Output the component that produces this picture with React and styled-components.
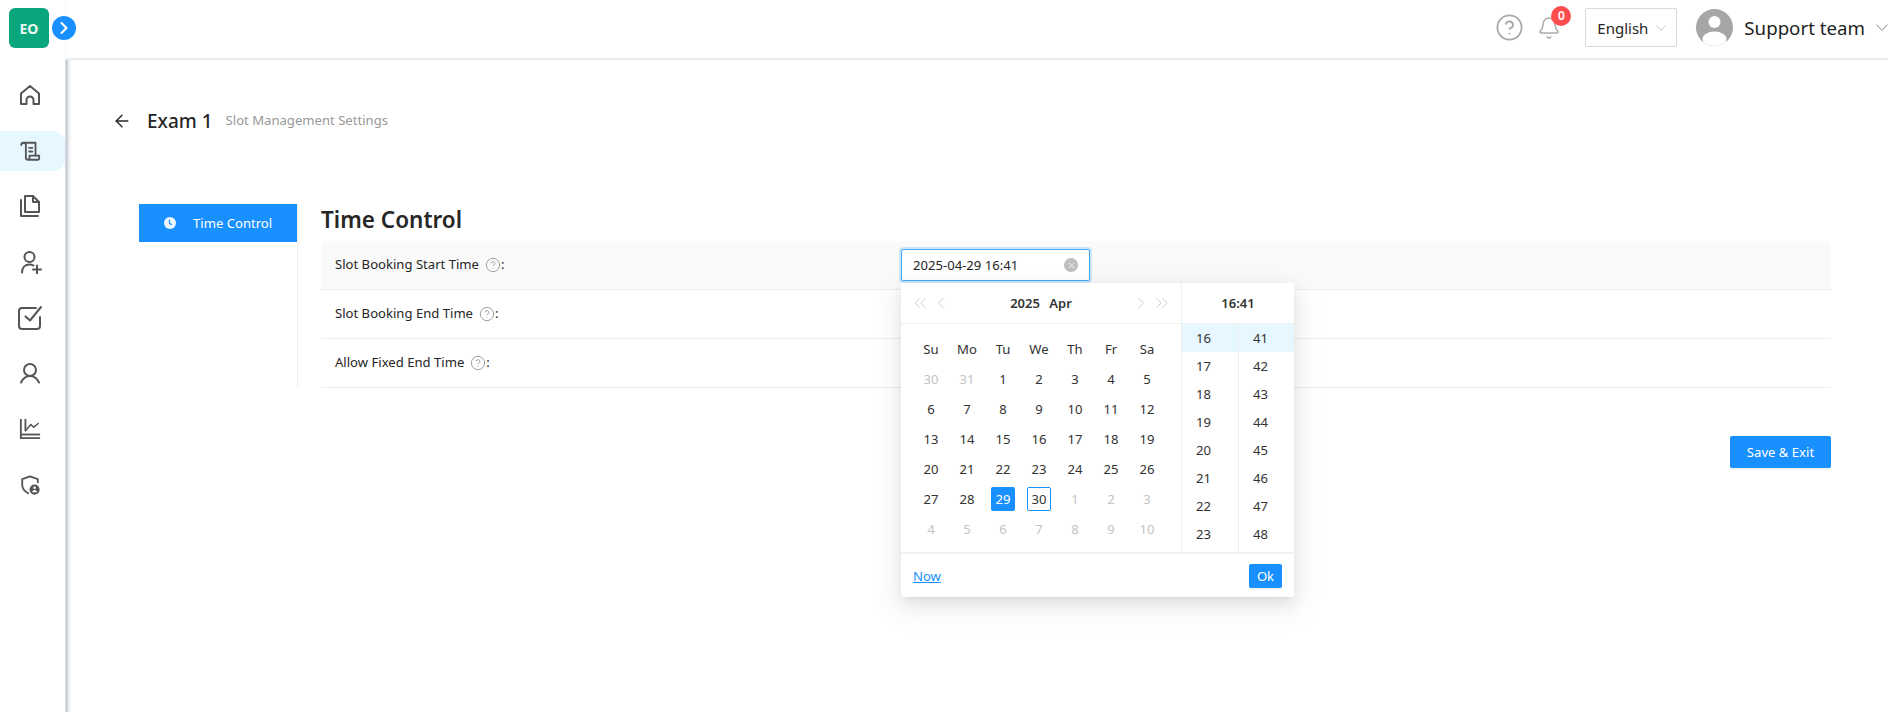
import styled, { createGlobalStyle } from 'styled-components';
import { ArrowLeft, ChevronRight, ChevronLeft, ChevronsLeft, ChevronsRight, Bell, CircleHelp, X } from 'lucide-react';

const GlobalStyle = createGlobalStyle`
  html, body { margin: 0; padding: 0; background: #fff; }
  body { font-family: "Noto Sans", "Open Sans", sans-serif; color: #262626; overflow: hidden; }
  * { box-sizing: border-box; }
`;

const Page = styled.div`
  width: 100%;
  height: 100vh;
  display: flex;
`;

const Sidebar = styled.nav`
  width: 65px;
  flex: none;
  display: flex;
  flex-direction: column;
  position: relative;
`;

const LogoWrap = styled.div`
  height: 75px;
  flex: none;
  padding: 8px 0 0 9px;
  margin-bottom: 15.7px;
  position: relative;
`;

const Logo = styled.div`
  width: 40px;
  height: 40px;
  border-radius: 6px;
  background: #0aa67d;
  color: #e9f8f3;
  font-size: 14px;
  font-weight: 700;
  display: flex;
  align-items: center;
  justify-content: center;
`;

const Expand = styled.div`
  position: absolute;
  left: 52px;
  top: 16px;
  z-index: 3;
  width: 24px;
  height: 24px;
  border-radius: 50%;
  background: #1890ff;
  color: #fff;
  display: flex;
  align-items: center;
  justify-content: center;
`;

const NavList = styled.div`
  display: flex;
  flex-direction: column;
  gap: 15.7px;
  margin-top: -15.7px;
`;

const NavItem = styled.div`
  height: 40px;
  flex: none;
  display: flex;
  align-items: center;
  justify-content: center;
  padding-right: 6px;
  color: #555;
  border-radius: 0 12px 12px 0;
  background: ${(p) => (p.$active ? '#e6f7ff' : 'transparent')};
`;

const Column = styled.div`
  flex: 1;
  min-width: 0;
  display: flex;
  flex-direction: column;
`;

const Header = styled.header`
  height: 60px;
  flex: none;
  display: flex;
  align-items: center;
  justify-content: flex-end;
  padding: 0 0 3px 0;
  border-left: 1px solid #f6f6f6;
  border-bottom: 2px solid #e9ecf0;
  background: #fff;
`;

const HelpButton = styled.div`
  display: flex;
  color: #a8a8a8;
  margin-right: 13px;
`;

const BellWrap = styled.div`
  position: relative;
  display: flex;
  color: #adadad;
  margin-right: 24px;
`;

const Badge = styled.span`
  position: absolute;
  left: 14px;
  top: -10px;
  width: 20px;
  height: 20px;
  border-radius: 50%;
  background: #ff4d4f;
  color: #fff;
  font-size: 12px;
  font-weight: 600;
  display: flex;
  align-items: center;
  justify-content: center;
`;

const LangSelect = styled.div`
  width: 92px;
  height: 39px;
  border: 1px solid #d9d9d9;
  border-radius: 2px;
  padding-left: 11px;
  display: flex;
  align-items: center;
  gap: 8px;
  font-size: 15px;
  color: #262626;
  margin-right: 19px;
`;

const Avatar = styled.div`
  width: 37px;
  height: 37px;
  border-radius: 50%;
  background: #a6a6a6;
  overflow: hidden;
  margin-right: 11px;
`;

const UserName = styled.span`
  font-size: 18.7px;
  color: #1f1f1f;
  margin-right: 11px;
  white-space: nowrap;
`;

const Main = styled.main`
  flex: 1;
  min-height: 0;
  padding: 0 57px 0 47px;
  background: linear-gradient(to right, #d5dae1 0, #c8ced8 2px, #eef0f3 4px, #fff 7px);
`;

const TitleRow = styled.div`
  height: 123px;
  padding-top: 48px;
  display: flex;
  align-items: flex-start;
  color: #262626;
`;

const BackIcon = styled.span`
  display: flex;
  margin: 3px 15px 0 0;
  color: #262626;
`;

const ExamTitle = styled.span`
  font-size: 19px;
  font-weight: 500;
  line-height: 26px;
  margin-right: 13px;
`;

const Subtitle = styled.span`
  font-size: 13.1px;
  line-height: 24px;
  color: #999;
`;

const Settings = styled.div`
  margin-left: 27px;
  padding-top: 21px;
  display: flex;
`;

const Tabs = styled.div`
  width: 159px;
  flex: none;
  border-right: 1px solid #f0f0f0;
  height: 184px;
`;

const Tab = styled.div`
  height: 38px;
  background: #1890ff;
  color: #fff;
  font-size: 13.1px;
  display: flex;
  align-items: center;
  padding-left: 25px;
  gap: 17px;
`;

const Content = styled.div`
  flex: 1;
  min-width: 0;
  margin-left: 23px;
`;

const Heading = styled.h2`
  margin: 0;
  height: 37px;
  font-size: 22.5px;
  line-height: 32px;
  font-weight: 600;
  color: #262626;
`;

const Row = styled.div`
  height: 49px;
  display: grid;
  grid-template-columns: 566px 1fr;
  align-items: center;
  padding-left: 14px;
  border-bottom: 1px solid #eeeeee;
  background: ${(p) => (p.$shaded ? '#fafafa' : '#fff')};
  font-size: 13.1px;
  color: #262626;
`;

const Label = styled.div`
  display: flex;
  align-items: center;
  padding-bottom: 2px;
`;

const HintIcon = styled.span`
  display: flex;
  margin: 2px 0 0 6px;
  color: #999;
`;

const Field = styled.div`
  position: relative;
  height: 32px;
`;

const DateInput = styled.div`
  width: 189px;
  height: 32px;
  border: 1px solid #40a9ff;
  border-radius: 2px;
  box-shadow: 0 0 0 2px rgba(24, 144, 255, 0.2);
  background: #fff;
  display: flex;
  align-items: center;
  justify-content: space-between;
  padding: 0 11px;
  font-size: 13.1px;
  color: #262626;
`;

const ClearIcon = styled.span`
  width: 14px;
  height: 14px;
  border-radius: 50%;
  background: #bfbfbf;
  color: #fff;
  display: flex;
  align-items: center;
  justify-content: center;
`;

const Popup = styled.div`
  position: absolute;
  left: 0;
  top: 34px;
  width: 393px;
  height: 314px;
  background: #fff;
  border-radius: 2px;
  box-shadow: 0 3px 6px -4px rgba(0,0,0,.12), 0 6px 16px rgba(0,0,0,.08), 0 9px 28px 8px rgba(0,0,0,.05);
  display: flex;
  flex-direction: column;
  z-index: 5;
`;

const PopupTop = styled.div`
  height: 271px;
  display: flex;
  border-bottom: 2px solid #f0f0f0;
`;

const CalendarPane = styled.div`
  width: 281px;
  border-right: 1px solid #f0f0f0;
`;

const PaneHeader = styled.div`
  height: 41px;
  border-bottom: 1px solid #f0f0f0;
  display: flex;
  align-items: center;
  justify-content: ${(p) => (p.$center ? 'center' : 'space-between')};
  padding: 0 9px;
  font-size: 13px;
  font-weight: 600;
  color: #333;
`;

const NavGroup = styled.span`
  display: flex;
  align-items: center;
  gap: 1px;
  color: #c8c8c8;
`;

const MonthLabel = styled.span`
  word-spacing: 6px;
`;

const DayGrid = styled.div`
  display: grid;
  grid-template-columns: repeat(7, 36px);
  grid-auto-rows: 30px;
  padding: 10px 0 0 12px;
  font-size: 13.1px;
`;

const DayCell = styled.div`
  display: flex;
  align-items: center;
  justify-content: center;
  color: ${(p) => (p.$muted ? '#c4c4c4' : '#333')};
`;

const DayNumber = styled.span`
  width: 24px;
  height: 24px;
  border-radius: 2px;
  display: flex;
  align-items: center;
  justify-content: center;
  background: ${(p) => (p.$selected ? '#1890ff' : 'transparent')};
  color: ${(p) => (p.$selected ? '#fff' : 'inherit')};
  border: ${(p) => (p.$today ? '1px solid #1890ff' : 'none')};
`;

const TimePane = styled.div`
  flex: 1;
  display: flex;
  flex-direction: column;
`;

const TimeColumns = styled.div`
  flex: 1;
  display: grid;
  grid-template-columns: 56px 1fr;
`;

const TimeColumn = styled.div`
  display: flex;
  flex-direction: column;
  border-left: ${(p) => (p.$divided ? '1px solid #f0f0f0' : 'none')};
`;

const TimeCell = styled.div`
  height: 28px;
  flex: none;
  padding-left: 14px;
  display: flex;
  align-items: center;
  font-size: 13.1px;
  color: #333;
  background: ${(p) => (p.$selected ? '#e6f7ff' : 'transparent')};
`;

const PopupFooter = styled.div`
  flex: 1;
  display: flex;
  align-items: center;
  justify-content: space-between;
  padding: 0 12px;
`;

const NowLink = styled.a`
  font-size: 13.1px;
  color: #1890ff;
  text-decoration: underline;
`;

const OkButton = styled.button`
  width: 33px;
  height: 24px;
  padding: 0;
  border: none;
  border-radius: 2px;
  background: #1890ff;
  color: #fff;
  font-family: inherit;
  font-size: 13.1px;
  box-shadow: 0 2px 0 rgba(0,0,0,.045);
`;

const Actions = styled.div`
  display: flex;
  justify-content: flex-end;
  margin-top: 48px;
`;

const SaveButton = styled.button`
  width: 101px;
  height: 32px;
  border: none;
  border-radius: 2px;
  background: #1890ff;
  color: #fff;
  font-family: inherit;
  font-size: 13.1px;
  box-shadow: 0 2px 0 rgba(0,0,0,.045);
`;

const Caret = ({ width, color }) => (
  <svg width={width} height={width * 0.6} viewBox="0 0 12 7" fill="none" stroke={color} strokeWidth="1">
    <path d="M.5.5 6 6.300 11.500.5" />
  </svg>
);

const NavIcon = ({ size = 24, box = 24, children }) => (
  <svg width={size} height={size} viewBox={`0 0 ${box} ${box}`} fill="none" stroke="currentColor" strokeWidth="2" strokeLinejoin="round" strokeLinecap="round">
    {children}
  </svg>
);

const navItems = [
  {
    key: 'home',
    icon: <NavIcon><path d="M3 10.500 12 3l9 7.500V21h-5.500v-4a3.500 3.500 0 0 0-7 0v4H3z" /></NavIcon>,
  },
  {
    key: 'exam',
    active: true,
    icon: (
      <NavIcon size={22}>
        <path d="M5 3h13v14" />
        <path d="M2.500 5.500C2.500 4 3.500 3 5 3s2.500 1 2.500 2.500V19c0 1.300 1 2.500 2.500 2.500h10.500c1 0 1.500-1 1.500-2V17H11.500v2c0 1.300-.6 2.500-1.500 2.500" />
        <path d="M11 8.500h3.500M11 12.500h3.500" />
      </NavIcon>
    ),
  },
  {
    key: 'files',
    icon: (
      <NavIcon>
        <path d="M7 2h8l6 6v10H7z" />
        <path d="M15 2v6h6" />
        <path d="M3 6v16h17" />
      </NavIcon>
    ),
  },
  {
    key: 'add',
    icon: (
      <NavIcon>
        <circle cx="11.500" cy="7" r="5" />
        <path d="M4 22.500c0-5 3-8 7.500-8 1.500 0 2.800.3 4 1" />
        <path d="M19 15.500v8M15 19.500h8" />
      </NavIcon>
    ),
  },
  {
    key: 'check',
    icon: (
      <NavIcon size={27} box={27}>
        <path d="M20 4H6a3 3 0 0 0-3 3v15a3 3 0 0 0 3 3h15a3 3 0 0 0 3-3v-9" />
        <path d="M9.500 12.500 14 16.500 25 3" />
      </NavIcon>
    ),
  },
  {
    key: 'user',
    icon: (
      <NavIcon>
        <circle cx="12" cy="9" r="6" />
        <path d="M3 21.500c2-4 5-6.500 9-6.500s7 2.500 9 6.500" />
      </NavIcon>
    ),
  },
  {
    key: 'chart',
    icon: (
      <NavIcon size={22}>
        <path d="M2 1v21h21" strokeLinejoin="miter" strokeLinecap="butt" />
        <path d="M2 18h21" strokeLinecap="butt" />
        <path d="M7 1v13" strokeLinecap="butt" />
        <path d="M7 14l6-7 3 3 5-4" strokeWidth="1.600" />
      </NavIcon>
    ),
  },
  {
    key: 'shield',
    icon: (
      <NavIcon size={22}>
        <path d="M20.500 9V5.500L12 2.500 3.500 5.500v6c0 4.500 2.500 7.500 6.500 9.500" />
        <circle cx="17" cy="17" r="5.500" fill="currentColor" stroke="none" />
        <circle cx="17" cy="15" r="1.400" fill="#fff" stroke="none" />
        <path d="M14.300 20c.4-1.600 1.500-2.500 2.700-2.500s2.300.9 2.700 2.500z" fill="#fff" stroke="none" />
      </NavIcon>
    ),
  },
];

const weekDays = ['Su', 'Mo', 'Tu', 'We', 'Th', 'Fr', 'Sa'];

const days = [
  ...[30, 31].map((d) => ({ d, muted: true })),
  ...Array.from({ length: 30 }, (_, i) => ({ d: i + 1 })),
  ...Array.from({ length: 10 }, (_, i) => ({ d: i + 1, muted: true })),
];

const hours = [16, 17, 18, 19, 20, 21, 22, 23];
const minutes = [41, 42, 43, 44, 45, 46, 47, 48];

const Hint = () => (
  <HintIcon><CircleHelp size={16} strokeWidth={1.4} /></HintIcon>
);

const ClockIcon = () => (
  <svg width="12" height="12" viewBox="0 0 12 12">
    <circle cx="6" cy="6" r="6" fill="#fff" opacity="0.92" />
    <path d="M5.500 2.800v3.500l2.500 1.400" fill="none" stroke="#1890ff" strokeWidth="1.200" />
  </svg>
);

const Calendar = () => (
  <Popup>
    <PopupTop>
      <CalendarPane>
        <PaneHeader>
          <NavGroup>
            <ChevronsLeft size={20} strokeWidth={1} />
            <ChevronLeft size={20} strokeWidth={1} />
          </NavGroup>
          <MonthLabel>2025 Apr</MonthLabel>
          <NavGroup>
            <ChevronRight size={20} strokeWidth={1} />
            <ChevronsRight size={20} strokeWidth={1} />
          </NavGroup>
        </PaneHeader>
        <DayGrid>
          {weekDays.map((w) => <DayCell key={w}>{w}</DayCell>)}
          {days.map((item, i) => (
            <DayCell key={i} $muted={item.muted}>
              <DayNumber
                $selected={!item.muted && item.d === 29}
                $today={!item.muted && item.d === 30}
              >
                {item.d}
              </DayNumber>
            </DayCell>
          ))}
        </DayGrid>
      </CalendarPane>
      <TimePane>
        <PaneHeader $center>16:41</PaneHeader>
        <TimeColumns>
          <TimeColumn>
            {hours.map((h) => <TimeCell key={h} $selected={h === 16}>{h}</TimeCell>)}
          </TimeColumn>
          <TimeColumn $divided>
            {minutes.map((m) => <TimeCell key={m} $selected={m === 41}>{m}</TimeCell>)}
          </TimeColumn>
        </TimeColumns>
      </TimePane>
    </PopupTop>
    <PopupFooter>
      <NowLink href="#">Now</NowLink>
      <OkButton>Ok</OkButton>
    </PopupFooter>
  </Popup>
);

const App = () => {
  return (
    <Page>
      <GlobalStyle />
      <Sidebar>
        <LogoWrap>
          <Logo>EO</Logo>
          <Expand><ChevronRight size={20} strokeWidth={2.5} /></Expand>
        </LogoWrap>
        <NavList>
          {navItems.map((item) => (
            <NavItem key={item.key} $active={item.active}>{item.icon}</NavItem>
          ))}
        </NavList>
      </Sidebar>
      <Column>
        <Header>
          <HelpButton><CircleHelp size={29} strokeWidth={1.5} /></HelpButton>
          <BellWrap>
            <Bell size={24} strokeWidth={1.5} />
            <Badge>0</Badge>
          </BellWrap>
          <LangSelect>
            English
            <Caret width={10} color="#bfbfbf" />
          </LangSelect>
          <Avatar>
            <svg width="37" height="37" viewBox="0 0 37 37">
              <circle cx="18.500" cy="13" r="6" fill="#fff" />
              <ellipse cx="18.500" cy="30" rx="12" ry="7.500" fill="#fff" />
            </svg>
          </Avatar>
          <UserName>Support team</UserName>
          <Caret width={12} color="#888" />
        </Header>
        <Main>
          <TitleRow>
            <BackIcon><ArrowLeft size={20} strokeWidth={1.6} /></BackIcon>
            <ExamTitle>Exam 1</ExamTitle>
            <Subtitle>Slot Management Settings</Subtitle>
          </TitleRow>
          <Settings>
            <Tabs>
              <Tab><ClockIcon />Time Control</Tab>
            </Tabs>
            <Content>
              <Heading>Time Control</Heading>
              <Row $shaded>
                <Label>Slot Booking Start Time<Hint />:</Label>
                <Field>
                  <DateInput>
                    2025-04-29 16:41
                    <ClearIcon><X size={9} strokeWidth={2} /></ClearIcon>
                  </DateInput>
                  <Calendar />
                </Field>
              </Row>
              <Row>
                <Label>Slot Booking End Time<Hint />:</Label>
              </Row>
              <Row>
                <Label>Allow Fixed End Time<Hint />:</Label>
              </Row>
              <Actions>
                <SaveButton>Save &amp; Exit</SaveButton>
              </Actions>
            </Content>
          </Settings>
        </Main>
      </Column>
    </Page>
  );
};

export default App;
